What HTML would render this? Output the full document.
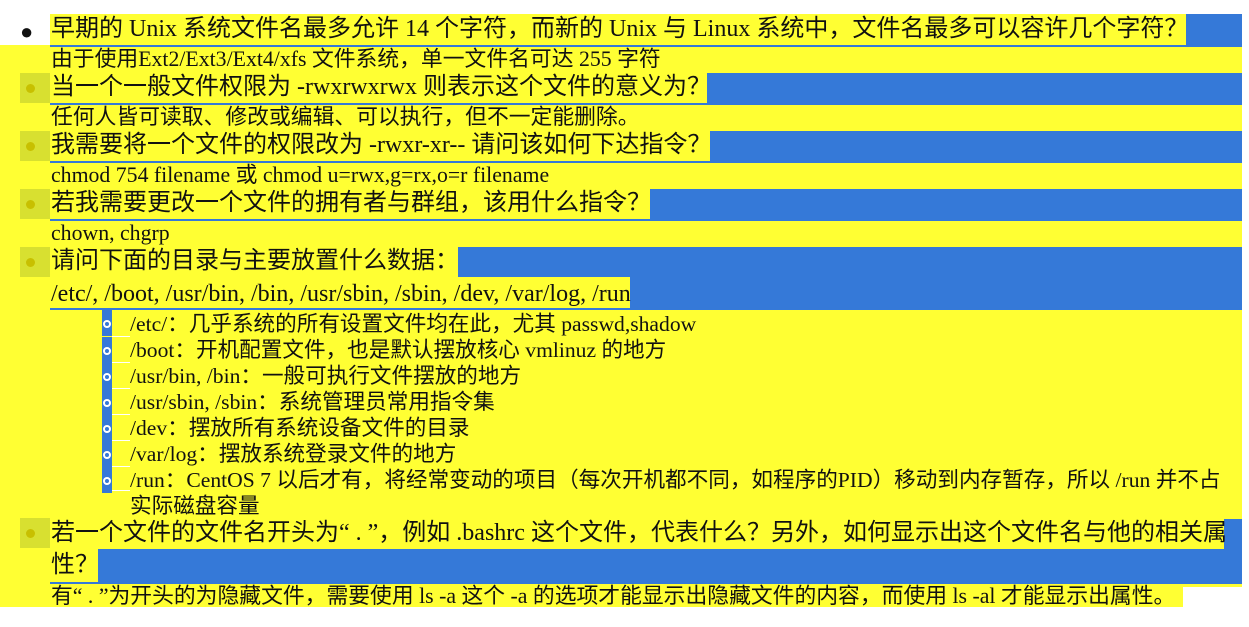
<!DOCTYPE html>
<html><head><meta charset="utf-8"><style>
body{margin:0;width:1249px;height:627px;background:#fff;position:relative;overflow:hidden;font-family:"Liberation Serif","Noto Sans CJK SC",serif;color:#111}
div{position:absolute;white-space:nowrap}
.y{background:#ffff33}
.b{background:#3579d8}
.q{font-size:24px;line-height:31px;left:51px}
.a{font-size:21.8px;line-height:25px;left:51px}
.s{font-size:21.6px;line-height:26px;left:130px}
.bx{left:20px;width:30px;height:30px;background:#d8e030}
.bx:after{content:"";position:absolute;left:6px;top:11px;width:9px;height:9px;border-radius:50%;background:#c8c000}
.ul{left:50px;width:1192px;height:2px;background:#3579d8}
.sb{left:102px;width:10px;height:26px;background:#3579d8}
.sb:after{content:"";position:absolute;left:1px;top:10px;width:4px;height:4px;border:2px solid #fff;border-radius:50%}
.sl{left:112px;width:18px;height:1px;background:#fff;}
</style></head><body>
<div class="y" style="left:0;top:45px;width:1242px;height:542px"></div>
<div class="y" style="left:0;top:587px;width:1183px;height:20px"></div>
<div class="y" style="left:50px;top:14px;width:1136px;height:31px"></div>
<div class="b" style="left:1186px;top:14px;width:56px;height:31px"></div>
<div class="ul" style="top:45px"></div>
<div class="q" style="top:14px">早期的 Unix 系统文件名最多允许 14 个字符，而新的 Unix 与 Linux 系统中，文件名最多可以容许几个字符？</div>
<div style="left:20px;top:19px;font-size:22px">●</div>
<div class="a" style="top:47px">由于使用Ext2/Ext3/Ext4/xfs 文件系统，单一文件名可达 255 字符</div>

<div class="bx" style="top:73px"></div>
<div class="b" style="left:707px;top:73px;width:535px;height:30px"></div>
<div class="ul" style="top:103px"></div>
<div class="q" style="top:72px">当一个一般文件权限为 -rwxrwxrwx 则表示这个文件的意义为？</div>
<div class="a" style="top:105px">任何人皆可读取、修改或编辑、可以执行，但不一定能删除。</div>

<div class="bx" style="top:131px"></div>
<div class="b" style="left:710px;top:131px;width:532px;height:30px"></div>
<div class="ul" style="top:161px"></div>
<div class="q" style="top:130px">我需要将一个文件的权限改为 -rwxr-xr-- 请问该如何下达指令？</div>
<div class="a" style="top:163px">chmod 754 filename 或 chmod u=rwx,g=rx,o=r filename</div>

<div class="bx" style="top:189px"></div>
<div class="b" style="left:650px;top:189px;width:592px;height:30px"></div>
<div class="ul" style="top:219px"></div>
<div class="q" style="top:188px">若我需要更改一个文件的拥有者与群组，该用什么指令？</div>
<div class="a" style="top:221px">chown, chgrp</div>

<div class="bx" style="top:247px"></div>
<div class="b" style="left:458px;top:247px;width:784px;height:30px"></div>
<div class="b" style="left:630px;top:277px;width:612px;height:31px"></div>
<div class="ul" style="top:308px"></div>
<div class="q" style="top:246px">请问下面的目录与主要放置什么数据：</div>
<div class="q" style="top:279px">/etc/, /boot, /usr/bin, /bin, /usr/sbin, /sbin, /dev, /var/log, /run</div>

<div class="sb" style="top:310px"></div><div class="sl" style="top:336px"></div>
<div class="sb" style="top:337px"></div><div class="sl" style="top:362px"></div>
<div class="sb" style="top:363px"></div><div class="sl" style="top:388px"></div>
<div class="sb" style="top:389px"></div><div class="sl" style="top:414px"></div>
<div class="sb" style="top:415px"></div><div class="sl" style="top:440px"></div>
<div class="sb" style="top:441px"></div><div class="sl" style="top:466px"></div>
<div class="sb" style="top:467px"></div><div class="sl" style="top:490px"></div>
<div class="s" style="top:311px">/etc/：几乎系统的所有设置文件均在此，尤其 passwd,shadow</div>
<div class="s" style="top:337px">/boot：开机配置文件，也是默认摆放核心 vmlinuz 的地方</div>
<div class="s" style="top:363px">/usr/bin, /bin：一般可执行文件摆放的地方</div>
<div class="s" style="top:389px">/usr/sbin, /sbin：系统管理员常用指令集</div>
<div class="s" style="top:415px">/dev：摆放所有系统设备文件的目录</div>
<div class="s" style="top:441px">/var/log：摆放系统登录文件的地方</div>
<div class="s" style="top:467px">/run：CentOS 7 以后才有，将经常变动的项目（每次开机都不同，如程序的PID）移动到内存暂存，所以 /run 并不占</div>
<div class="s" style="top:493px">实际磁盘容量</div>

<div class="bx" style="top:518px"></div>
<div class="b" style="left:1224px;top:519px;width:18px;height:30px"></div>
<div class="b" style="left:98px;top:549px;width:1144px;height:33px"></div>
<div class="ul" style="top:582px"></div>
<div class="q" style="top:518px">若一个文件的文件名开头为“ . ”，例如 .bashrc 这个文件，代表什么？另外，如何显示出这个文件名与他的相关属</div>
<div class="q" style="top:550px">性？</div>
<div class="a" style="top:584px">有“ . ”为开头的为隐藏文件，需要使用 ls -a 这个 -a 的选项才能显示出隐藏文件的内容，而使用 ls -al 才能显示出属性。</div>
</body></html>
